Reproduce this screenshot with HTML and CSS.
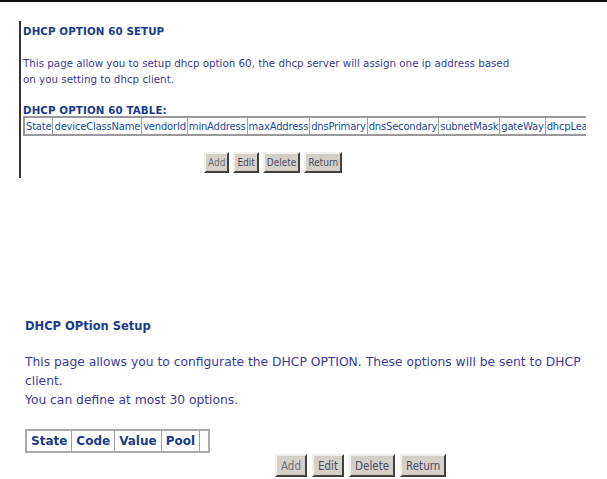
FILE: index.html
```html
<!DOCTYPE html>
<html lang="en">
<head>
    <meta charset="UTF-8">
    <title>DHCP Option</title>
    <link rel="stylesheet" href="styles.css">
</head>
<body>
    <div class="topbar"></div>

    <div class="frame">
        <h2 class="title-small">DHCP OPTION 60 SETUP</h2>
        <p class="info-small">
            This page allow you to setup dhcp option 60, the dhcp server will assign one ip address based<br>
            on you setting to dhcp client.
        </p>
        <h3 class="title-small table-title">DHCP OPTION 60 TABLE:</h3>
        <table class="grid grid-small">
            <tr>
                <td>State</td>
                <td>deviceClassName</td>
                <td>vendorId</td>
                <td>minAddress</td>
                <td>maxAddress</td>
                <td>dnsPrimary</td>
                <td>dnsSecondary</td>
                <td>subnetMask</td>
                <td>gateWay</td>
                <td>dhcpLeaseTime</td>
            </tr>
        </table>
        <div class="buttons buttons-small">
            <button class="btn dim">Add</button>
            <button class="btn">Edit</button>
            <button class="btn">Delete</button>
            <button class="btn">Return</button>
        </div>
    </div>

    <div class="section">
        <h2 class="title">DHCP OPtion Setup</h2>
        <p class="info">
            This page allows you to configurate the DHCP OPTION. These options will be sent to DHCP<br>
            client.<br>
            You can define at most 30 options.
        </p>
        <table class="grid grid-big">
            <tr>
                <th>State</th>
                <th>Code</th>
                <th>Value</th>
                <th>Pool</th>
                <th class="empty"></th>
            </tr>
        </table>
        <div class="buttons buttons-big">
            <button class="btn dim">Add</button>
            <button class="btn">Edit</button>
            <button class="btn">Delete</button>
            <button class="btn">Return</button>
        </div>
    </div>
</body>
</html>
```

FILE: styles.css
```css
* {
    margin: 0;
    padding: 0;
    box-sizing: border-box;
}

body {
    font-family: "DejaVu Sans", Verdana, sans-serif;
    background: #fff;
    color: #333399;
    width: 607px;
    height: 479px;
    overflow: hidden;
}

.topbar {
    height: 2px;
    background: #111;
}

/* upper page, shown inside a narrow frame */
.frame {
    margin: 19px 0 0 19px;
    width: 567px;
    height: 157px;
    border-left: 2px solid #333;
    padding: 4px 0 0 2px;
    overflow: hidden;
}

.title-small {
    font-size: 10.3px;
    font-weight: bold;
    color: #1b3a8a;
    letter-spacing: 0.1px;
}

.info-small {
    font-size: 10.3px;
    line-height: 16px;
    color: #3a3a9a;
    margin-top: 18px;
    white-space: nowrap;
}

.table-title {
    margin-top: 17px;
}

.grid {
    border-collapse: collapse;
    white-space: nowrap;
}

.grid td,
.grid th {
    border: 1px solid #a0a0a0;
    color: #1a4aa0;
}

.grid-small {
    margin-top: 0;
    border: 2px solid #999;
}

.grid-small td {
    font-size: 10px;
    height: 18px;
    padding: 0 1px;
    letter-spacing: -0.2px;
}

.buttons {
    display: flex;
}

.buttons-small {
    gap: 4px;
    margin: 16px 0 0 181px;
}

.btn {
    font-family: "DejaVu Sans Condensed", "DejaVu Sans", sans-serif;
    background: #d4d0c8;
    color: #4c4c66;
    border: 2px solid;
    border-color: #f2f0ec #404040 #404040 #f2f0ec;
    cursor: pointer;
}

.btn.dim {
    color: #707080;
}

.buttons-small .btn {
    font-size: 10px;
    height: 21px;
    padding: 0 2px;
}

.section {
    padding: 320px 0 0 25px;
    margin-top: -179px;
}

.title {
    font-size: 11.5px;
    font-weight: bold;
    color: #1b3a8a;
}

.info {
    font-size: 12.3px;
    line-height: 19px;
    color: #3a3a9a;
    margin-top: 20px;
}

.grid-big {
    margin-top: 19px;
    border: 2px solid #aaa;
}

.grid-big th {
    font-size: 12px;
    font-weight: bold;
    height: 22px;
    padding: 0 4px;
    text-align: left;
    color: #1b3a8a;
}

.grid-big th.empty {
    width: 9px;
    padding: 0;
}

.buttons-big {
    gap: 5px;
    margin: 1px 0 0 250px;
}

.buttons-big .btn {
    font-size: 11.5px;
    height: 23px;
    padding: 0 4px;
}
```
